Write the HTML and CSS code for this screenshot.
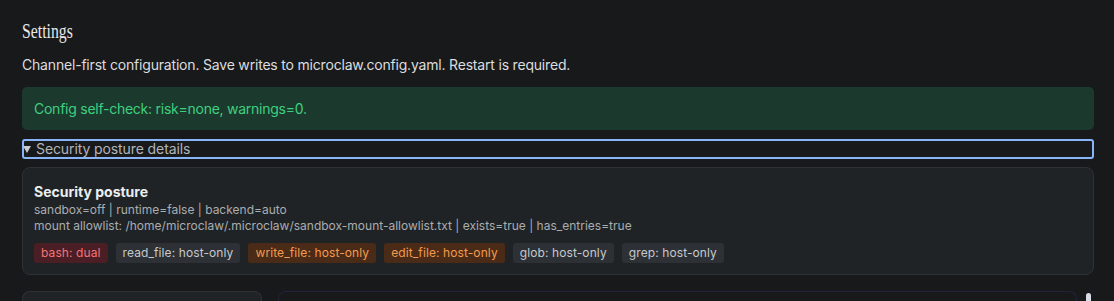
FILE: index.html
```html
<!DOCTYPE html>
<html lang="en">
<head>
    <meta charset="UTF-8">
    <meta name="viewport" content="width=device-width, initial-scale=1.0">
    <title>Settings</title>
    <link rel="stylesheet" href="styles.css">
</head>
<body>

<div class="page">
    <h2 class="page-title"><span>Settings</span></h2>
    <p class="page-desc">Channel-first configuration. Save writes to microclaw.config.yaml. Restart is required.</p>

    <!-- self-check result -->
    <div class="notice-ok">Config self-check: risk=none, warnings=0.</div>

    <details class="posture" open>
        <summary>Security posture details</summary>
        <div class="card posture-card">
            <div class="card-title">Security posture</div>
            <div class="meta">sandbox=off | runtime=false | backend=auto</div>
            <div class="meta">mount allowlist: /home/microclaw/.microclaw/sandbox-mount-allowlist.txt | exists=true | has_entries=true</div>
            <div class="badges">
                <span class="badge badge-red">bash: dual</span>
                <span class="badge">read_file: host-only</span>
                <span class="badge badge-orange">write_file: host-only</span>
                <span class="badge badge-orange">edit_file: host-only</span>
                <span class="badge">glob: host-only</span>
                <span class="badge">grep: host-only</span>
            </div>
        </div>
    </details>

    <div class="split">
        <div class="card side"></div>
        <div class="card main"></div>
        <div class="scroll-thumb"></div>
    </div>
</div>

</body>
</html>
```

FILE: styles.css
```css
body {
    margin: 0;
    padding: 0;
    font-family: Inter, 'Noto Sans', sans-serif;
    color: #dfe1e3;
    background-color: #18191b;
    overflow: hidden;
}

.page {
    padding: 19px 20px 0 22px;
}

.page-title {
    margin: 0;
    font-family: 'Liberation Serif', serif;
    font-weight: normal;
    font-size: 21px;
    line-height: 24px;
    color: #e8e8e8;
}

/* the reference uses a condensed display serif */
.page-title span {
    display: inline-block;
    transform: scaleX(0.75);
    transform-origin: left center;
}

.page-desc {
    margin: 12px 0 0;
    font-size: 14px;
    line-height: 20px;
    letter-spacing: -0.19px;
    color: #dcdddf;
}

.notice-ok {
    margin-top: 12px;
    padding: 12px;
    background-color: #1b3a2d;
    border-radius: 5px;
    color: #3fcf80;
    font-size: 14px;
    line-height: 19px;
    letter-spacing: -0.25px;
}

.posture {
    margin-top: 9px;
}

.posture summary {
    list-style: none;
    display: flex;
    align-items: center;
    font-size: 14px;
    line-height: 16px;
    letter-spacing: -0.1px;
    color: #b2b5b9;
    border: 2px solid #8ab4f8;
    border-radius: 3px;
    cursor: pointer;
}

.posture summary::-webkit-details-marker {
    display: none;
}

/* small open-state triangle */
.posture summary::before {
    content: "";
    width: 0;
    height: 0;
    margin: 1px 5px 0 -1px;
    border-left: 4px solid transparent;
    border-right: 4px solid transparent;
    border-top: 7px solid #c9ccd0;
}

.card {
    background-color: #202325;
    border: 1px solid #2f3235;
    border-radius: 8px;
    box-sizing: border-box;
}

.posture-card {
    margin-top: 8px;
    padding: 14px 11px 11px;
}

.card-title {
    font-size: 14px;
    font-weight: 700;
    line-height: 20px;
    color: #eceef0;
}

.meta {
    font-size: 12px;
    line-height: 16px;
    color: #a9adb1;
}

.badges {
    display: flex;
    gap: 8px;
    margin-top: 9px;
}

.badge {
    padding: 0 7px;
    font-size: 12px;
    line-height: 20px;
    letter-spacing: 0.1px;
    border-radius: 3px;
    background-color: #2d3034;
    color: #c6c9cd;
}

.badge-red {
    background-color: #4a1e24;
    color: #f37378;
}

.badge-orange {
    background-color: #4a2b18;
    color: #f59a4c;
}

.split {
    display: flex;
    margin-top: 16px;
    height: 10px;
}

.side {
    width: 240px;
    border-bottom: none;
    border-radius: 8px 8px 0 0;
}

.main {
    flex: 1;
    margin-left: 16px;
    background-color: #18191b;
    border-color: #21233a;
    border-bottom: none;
    border-radius: 8px 8px 0 0;
}

.scroll-thumb {
    width: 5px;
    margin: 2px 3px 0 9px;
    background-color: #d8dde6;
    border-radius: 3px 3px 0 0;
}
```
